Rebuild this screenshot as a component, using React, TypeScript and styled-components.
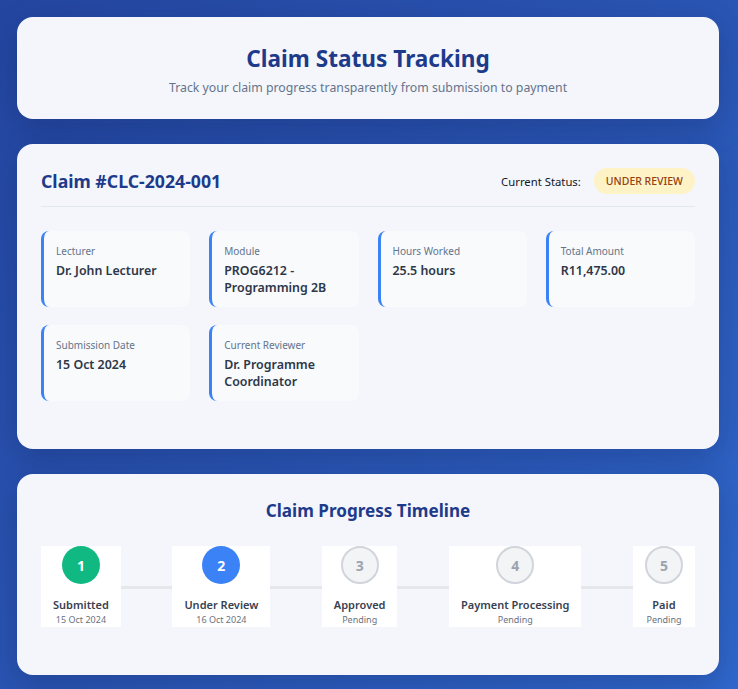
import React from "react";
import styled, { createGlobalStyle } from "styled-components";

const GlobalStyle = createGlobalStyle`
  * { box-sizing: border-box; }
  html, body { margin: 0; padding: 0; }
  body {
    font-family: "Noto Sans", "Open Sans", sans-serif;
    background: linear-gradient(135deg, #2446a0 0%, #2a55b3 50%, #3068cc 100%);
    min-height: 100vh;
  }
`;

const Page = styled.div`
  display: flex;
  flex-direction: column;
  gap: 25px;
  padding: 17px 19px 15px 17px;
`;

const Card = styled.section<{ $pad?: string }>`
  background: #f4f6fb;
  border-radius: 16px;
  box-shadow: 0 10px 30px rgba(10, 25, 70, 0.25);
  padding: ${(p) => p.$pad || "24px"};
`;

const HeroTitle = styled.h1`
  margin: 0;
  text-align: center;
  font-size: 22.6px;
  line-height: 32px;
  font-weight: 700;
  color: #1e3a8a;
`;

const HeroSub = styled.p`
  margin: 3px 0 0;
  text-align: center;
  font-size: 12.3px;
  line-height: 20px;
  color: #64748b;
`;

const Header = styled.div`
  display: flex;
  align-items: center;
  justify-content: space-between;
  padding-bottom: 12px;
  border-bottom: 1px solid #e2e8f0;
`;

const ClaimTitle = styled.h2`
  margin: 0;
  font-size: 17.7px;
  line-height: 26px;
  font-weight: 700;
  color: #1e3a8a;
`;

const StatusWrap = styled.div`
  display: flex;
  align-items: center;
  gap: 13px;
  font-size: 11.3px;
  color: #111827;
`;

const Badge = styled.span`
  display: inline-flex;
  align-items: center;
  height: 26px;
  padding: 0 12px;
  border-radius: 13px;
  background: #fef3c7;
  color: #92400e;
  font-size: 10.5px;
  font-weight: 500;
  text-transform: uppercase;
`;

const InfoGrid = styled.div`
  display: grid;
  grid-template-columns: repeat(4, 1fr);
  gap: 18px 19px;
  margin: 24px 0;
`;

const InfoItem = styled.div`
  background: #f8fafc;
  border-left: 3px solid #3b82f6;
  border-radius: 8px;
  padding: 13px 12px 11px;
`;

const InfoLabel = styled.div`
  font-size: 10px;
  line-height: 14px;
  color: #64748b;
  margin-bottom: 4px;
`;

const InfoValue = styled.div`
  font-size: 12.4px;
  line-height: 17px;
  font-weight: 600;
  color: #2d3748;
`;

const TimelineTitle = styled.h2`
  margin: 0;
  text-align: center;
  font-size: 17.1px;
  line-height: 26px;
  font-weight: 700;
  color: #1e3a8a;
`;

const Timeline = styled.div`
  position: relative;
  display: flex;
  justify-content: space-between;
  margin: 22px 0 24px;
  &::before {
    content: "";
    position: absolute;
    left: 0;
    right: 0;
    top: 40px;
    height: 3px;
    background: #e5e7eb;
  }
`;

const Step = styled.div`
  position: relative;
  z-index: 1;
  display: flex;
  flex-direction: column;
  align-items: center;
  background: #ffffff;
  padding: 0 12px;
`;

type StepState = "done" | "active" | "pending";

const Circle = styled.div<{ $state: StepState }>`
  width: 38px;
  height: 38px;
  border-radius: 50%;
  display: flex;
  align-items: center;
  justify-content: center;
  font-size: 14px;
  font-weight: 700;
  background: ${(p) =>
    p.$state === "done" ? "#10b981" : p.$state === "active" ? "#3b82f6" : "#f3f4f6"};
  color: ${(p) => (p.$state === "pending" ? "#9ca3af" : "#ffffff")};
  border: ${(p) => (p.$state === "pending" ? "2px solid #d1d5db" : "none")};
`;

const StepLabel = styled.div`
  margin-top: 13px;
  font-size: 11px;
  line-height: 16px;
  font-weight: 600;
  color: #374151;
  white-space: nowrap;
`;

const StepDate = styled.div`
  font-size: 9px;
  line-height: 14px;
  color: #6b7280;
  white-space: nowrap;
`;

const info = [
  { label: "Lecturer", value: "Dr. John Lecturer" },
  { label: "Module", value: "PROG6212 - Programming 2B" },
  { label: "Hours Worked", value: "25.5 hours" },
  { label: "Total Amount", value: "R11,475.00" },
  { label: "Submission Date", value: "15 Oct 2024" },
  { label: "Current Reviewer", value: "Dr. Programme Coordinator" },
];

const steps: { n: number; label: string; date: string; state: StepState }[] = [
  { n: 1, label: "Submitted", date: "15 Oct 2024", state: "done" },
  { n: 2, label: "Under Review", date: "16 Oct 2024", state: "active" },
  { n: 3, label: "Approved", date: "Pending", state: "pending" },
  { n: 4, label: "Payment Processing", date: "Pending", state: "pending" },
  { n: 5, label: "Paid", date: "Pending", state: "pending" },
];

export default function App() {
  return (
    <>
      <GlobalStyle />
      <Page>
        <Card $pad="26px 24px 21px">
          <HeroTitle>Claim Status Tracking</HeroTitle>
          <HeroSub>Track your claim progress transparently from submission to payment</HeroSub>
        </Card>

        <Card $pad="24px 24px 24px">
          <Header>
            <ClaimTitle>Claim #CLC-2024-001</ClaimTitle>
            <StatusWrap>
              <span>Current Status:</span>
              <Badge>Under Review</Badge>
            </StatusWrap>
          </Header>
          <InfoGrid>
            {info.map((i) => (
              <InfoItem key={i.label}>
                <InfoLabel>{i.label}</InfoLabel>
                <InfoValue>{i.value}</InfoValue>
              </InfoItem>
            ))}
          </InfoGrid>
        </Card>

        <Card>
          <TimelineTitle>Claim Progress Timeline</TimelineTitle>
          <Timeline>
            {steps.map((s) => (
              <Step key={s.n}>
                <Circle $state={s.state}>{s.n}</Circle>
                <StepLabel>{s.label}</StepLabel>
                <StepDate>{s.date}</StepDate>
              </Step>
            ))}
          </Timeline>
        </Card>
      </Page>
    </>
  );
}
